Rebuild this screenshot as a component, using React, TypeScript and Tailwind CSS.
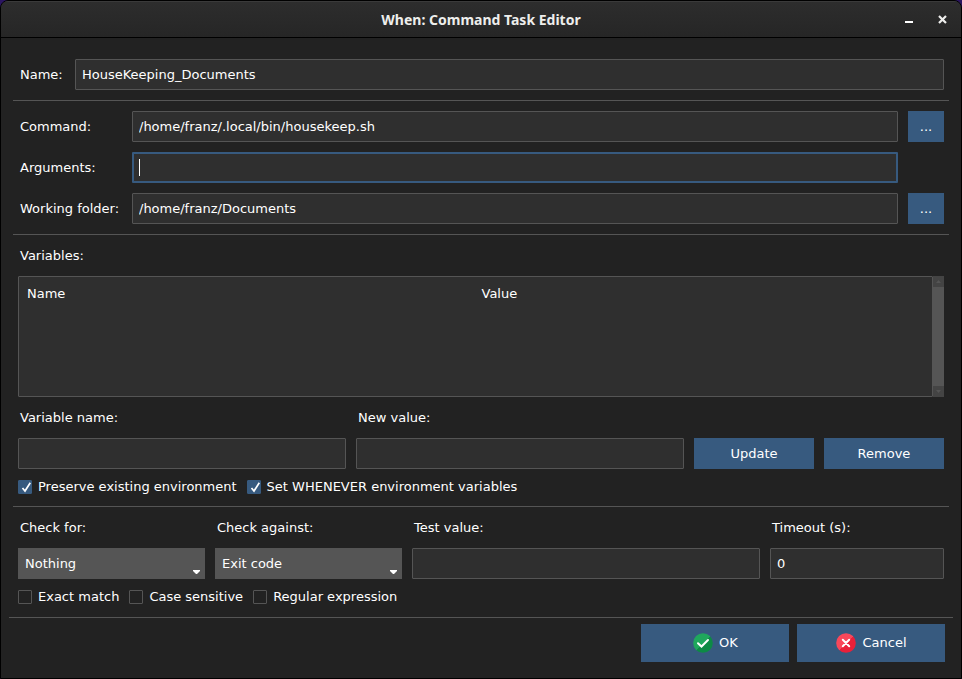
import type { ReactNode } from "react";

const field =
  "block h-[31px] w-full min-w-0 rounded-[1px] border border-[#555555] bg-[#2f2f2f] px-1.5 text-white outline-none";
const button = "bg-[#375a7f] text-white";

function Rule() {
  return <hr className="h-px border-0 bg-[#555555]" />;
}

function Caption({ htmlFor, children }: { htmlFor: string; children: ReactNode }) {
  return (
    <label htmlFor={htmlFor} className="block h-[21px] pl-0.5 leading-[21px]">
      {children}
    </label>
  );
}

function PathRow({ id, label, value, focused, browse }: {
  id: string;
  label: string;
  value: string;
  focused?: boolean;
  browse?: boolean;
}) {
  return (
    <div className="grid grid-cols-[104px_1fr_36px] items-center gap-x-2.5">
      <label htmlFor={id} className="pl-0.5 whitespace-nowrap">{label}</label>
      {focused ? (
        <div className="relative">
          <input
            id={id}
            defaultValue={value}
            className="block h-[31px] w-full rounded-[1px] border-2 border-[#375a7f] bg-[#2f2f2f] px-[5px] text-white outline-none"
          />
          <span className="absolute top-[7px] left-[7px] h-[17px] w-px bg-white" />
        </div>
      ) : (
        <input id={id} defaultValue={value} className={field} />
      )}
      {browse && (
        <button type="button" aria-label={`Browse ${label}`} className={`${button} h-[31px]`}>
          ...
        </button>
      )}
    </div>
  );
}

function Check({ label, checked }: { label: string; checked?: boolean }) {
  return (
    <label className="flex h-4 items-center gap-1.5">
      <span className="relative block size-3.5">
        <input
          type="checkbox"
          defaultChecked={checked}
          className="peer block size-3.5 appearance-none rounded-[1px] border border-[#555555] bg-[#222222] checked:border-[#375a7f] checked:bg-[#375a7f]"
        />
        <svg
          viewBox="0 0 14 14"
          className="pointer-events-none absolute inset-0 hidden size-3.5 fill-none stroke-white peer-checked:block"
        >
          <path d="M4.5 8 L7 11 L12.3 2.8" strokeWidth="1.7" />
        </svg>
      </span>
      <span className="whitespace-nowrap">{label}</span>
    </label>
  );
}

function Choice({ id, value }: { id: string; value: string }) {
  return (
    <div className="relative">
      <select
        id={id}
        defaultValue={value}
        className="block h-[31px] w-full appearance-none bg-[#555555] px-[7px] text-white outline-none"
      >
        <option>{value}</option>
      </select>
      <svg viewBox="0 0 7 4" className="pointer-events-none absolute right-[5px] bottom-[5px] h-1 w-[7px] fill-white">
        <path d="M0 0H7V1L4 4H3L0 1Z" />
      </svg>
    </div>
  );
}

function OkIcon() {
  return (
    <svg viewBox="0 0 20 20" className="size-5 fill-none">
      <defs>
        <linearGradient id="ok" x1="0" y1="0" x2="1" y2="1">
          <stop offset="0.5" stopColor="#1fa75c" />
          <stop offset="0.5" stopColor="#0d8a45" />
        </linearGradient>
      </defs>
      <circle cx="10" cy="10" r="9.8" fill="url(#ok)" />
      <path d="M5 10.2 L8.5 13.5 L15 7" stroke="#fff" strokeWidth="2" strokeLinecap="round" />
    </svg>
  );
}

function CancelIcon() {
  return (
    <svg viewBox="0 0 20 20" className="size-5 fill-none">
      <defs>
        <linearGradient id="cancel" x1="0" y1="0" x2="1" y2="1">
          <stop offset="0.5" stopColor="#f9475a" />
          <stop offset="0.5" stopColor="#ea2039" />
        </linearGradient>
      </defs>
      <circle cx="10" cy="10" r="9.8" fill="url(#cancel)" />
      <path d="M6.8 6.8 L13.2 13.2 M13.2 6.8 L6.8 13.2" stroke="#fff" strokeWidth="2" strokeLinecap="round" />
    </svg>
  );
}

export default function App() {
  return (
    <div className="min-h-screen bg-[#2b1560] font-['DejaVu_Sans',sans-serif] text-[13px] leading-5 text-white">
      <div className="flex min-h-screen flex-col overflow-hidden rounded-t-lg border border-black bg-[#222222]">
        <header className="grid h-[37px] grid-cols-[1fr_auto_1fr] items-center border-t border-b border-t-[#3a3a3a] border-b-black bg-linear-to-b from-[#2d2d2d] to-[#262626] px-3.5">
          <span />
          <h1 className="font-['Noto_Sans',sans-serif] text-[14px] font-bold text-[#eeeeec]">When: Command Task Editor</h1>
          <div className="flex items-center justify-end gap-[25px]">
            <button type="button" aria-label="Minimize">
              <svg viewBox="0 0 9 9" className="size-[9px]">
                <path d="M1 6h8v2H1z" fill="#fff" />
              </svg>
            </button>
            <button type="button" aria-label="Close">
              <svg viewBox="0 0 9 9" className="size-[9px] stroke-[#eeeeec]" strokeWidth="2.2">
                <path d="M1 1 L8 8 M8 1 L1 8" />
              </svg>
            </button>
          </div>
        </header>

        <main className="px-2">
          <div className="px-1">
            <div className="grid grid-cols-[47px_1fr] items-center gap-x-2.5 px-[5px] pt-[21px] pb-2.5">
              <label htmlFor="task-name" className="pl-0.5">Name:</label>
              <input id="task-name" defaultValue="HouseKeeping_Documents" className={field} />
            </div>
            <Rule />
            <div className="flex flex-col gap-2.5 px-[5px] py-2.5">
              <PathRow id="command" label="Command:" value="/home/franz/.local/bin/housekeep.sh" browse />
              <PathRow id="arguments" label="Arguments:" value="" focused />
              <PathRow id="folder" label="Working folder:" value="/home/franz/Documents" browse />
            </div>
            <Rule />
            <section className="flex flex-col gap-2.5 px-[5px] pt-2.5 pb-[11px]">
              <h2 className="h-[21px] pl-0.5 leading-[21px]">Variables:</h2>
              <div className="flex">
                <div className="h-[121px] flex-1 rounded-[1px] border border-[#555555] bg-[#2f2f2f] px-2 py-1.5">
                  <table className="w-full table-fixed text-left leading-[21px]">
                    <thead>
                      <tr>
                        <th className="p-0 font-normal">Name</th>
                        <th className="p-0 pl-1.5 font-normal">Value</th>
                      </tr>
                    </thead>
                  </table>
                </div>
                <div className="flex w-[11px] flex-col bg-[#555555]">
                  <div className="flex h-[11px] items-center justify-center bg-[#444444]">
                    <svg viewBox="0 0 5 3" className="h-[3px] w-[5px] fill-[#555555]"><path d="M0 3L2.5 0L5 3Z" /></svg>
                  </div>
                  <div className="flex-1" />
                  <div className="flex h-[11px] items-center justify-center bg-[#444444]">
                    <svg viewBox="0 0 5 3" className="h-[3px] w-[5px] fill-[#555555]"><path d="M0 0L2.5 3L5 0Z" /></svg>
                  </div>
                </div>
              </div>
              <div className="grid grid-cols-[1fr_1fr_120px_120px] gap-2.5">
                <Caption htmlFor="var-name">Variable name:</Caption>
                <Caption htmlFor="var-value">New value:</Caption>
                <input id="var-name" className={`${field} col-start-1`} />
                <input id="var-value" className={field} />
                <button type="button" className={button}>Update</button>
                <button type="button" className={button}>Remove</button>
              </div>
              <div className="flex gap-2.5">
                <Check label="Preserve existing environment" checked />
                <Check label="Set WHENEVER environment variables" checked />
              </div>
            </section>
            <Rule />
            <section className="flex flex-col gap-2.5 px-[5px] pt-2.5 pb-3">
              <div className="grid grid-cols-[187px_187px_2fr_1fr] gap-2.5">
                <Caption htmlFor="check-for">Check for:</Caption>
                <Caption htmlFor="check-against">Check against:</Caption>
                <Caption htmlFor="test-value">Test value:</Caption>
                <Caption htmlFor="timeout">Timeout (s):</Caption>
                <Choice id="check-for" value="Nothing" />
                <Choice id="check-against" value="Exit code" />
                <input id="test-value" className={field} />
                <input id="timeout" defaultValue="0" className={field} />
              </div>
              <div className="flex gap-2.5">
                <Check label="Exact match" />
                <Check label="Case sensitive" />
                <Check label="Regular expression" />
              </div>
            </section>
          </div>
          <Rule />
          <footer className="flex justify-end gap-2 px-2 pt-1.5 pb-4">
            <button type="button" className={`${button} flex h-[38px] w-[148px] items-center justify-center gap-1.5 pl-px`}>
              <OkIcon />
              <span>OK</span>
            </button>
            <button type="button" className={`${button} flex h-[38px] w-[148px] items-center justify-center gap-1.5 pl-px`}>
              <CancelIcon />
              <span>Cancel</span>
            </button>
          </footer>
        </main>
      </div>
    </div>
  );
}
